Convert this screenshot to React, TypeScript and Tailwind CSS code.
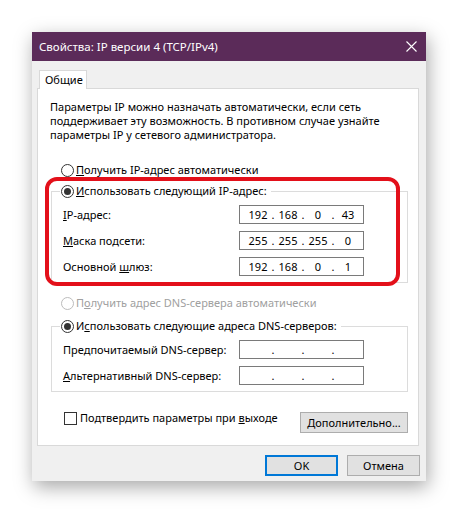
import React from "react";

// Windows 10 "Internet Protocol Version 4 (TCP/IPv4) Properties" dialog (ru-RU)

function Radio({ checked, disabled }: { checked?: boolean; disabled?: boolean }) {
  return (
    <span
      className={`flex h-[13px] w-[13px] shrink-0 items-center justify-center rounded-full border bg-white ${
        disabled ? "border-[#bcbcbc]" : "border-[#333333]"
      }`}
    >
      {checked && <span className="h-[7px] w-[7px] rounded-full bg-[#333333]" />}
    </span>
  );
}

function IpField({ value }: { value?: string[] }) {
  const parts = value ?? ["", "", "", ""];
  return (
    <div className="flex h-[19px] w-[125px] items-center border border-[#7a7a7a] bg-white pl-[6px]">
      {parts.map((p, i) => (
        <React.Fragment key={i}>
          <span className="w-[24px] text-center">{p}</span>
          {i < 3 && <span className="w-[6px] text-center">.</span>}
        </React.Fragment>
      ))}
    </div>
  );
}

function Row({ label, value }: { label: React.ReactNode; value?: string[] }) {
  return (
    <div className="flex items-center">
      <span className="flex-1 whitespace-nowrap">{label}</span>
      <IpField value={value} />
    </div>
  );
}

const U = ({ children }: { children: React.ReactNode }) => <span className="underline">{children}</span>;

export default function App() {
  return (
    <div className="relative h-[513px] w-[458px] overflow-hidden bg-white pl-[32px] pt-[32px] font-['Noto_Sans',sans-serif] text-[11px] leading-[16px] text-black">
      <div className="flex h-[449px] w-[394px] flex-col bg-[#f0f0f0] shadow-[2px_6px_18px_rgba(0,0,0,0.35)]">
        <div className="flex h-[29px] items-center justify-between bg-[#5b2b59] pl-[7px] pr-[8px] text-[11.5px] text-white">
          <span>Свойства: IP версии 4 (TCP/IPv4)</span>
          <svg width="11" height="11" viewBox="0 0 11 11" className="mr-[1px]">
            <path d="M0.5 0.5 L10.5 10.5 M10.5 0.5 L0.5 10.5" stroke="white" strokeWidth="1.1" fill="none" />
          </svg>
        </div>

        <div className="pl-[5px] pt-[9px]">
          <div className="relative z-10 -mb-px ml-[2px] flex h-[19px] w-[48px] items-center border border-b-0 border-[#d9d9d9] bg-white pl-[5px]">
            Общие
          </div>
          <div className="h-[358px] w-[382px] border border-[#d9d9d9] bg-white pl-[13px] pt-[11px]">
            <p className="-ml-px leading-[14px]">
              Параметры IP можно назначать автоматически, если сеть
              <br />
              поддерживает эту возможность. В противном случае узнайте
              <br />
              параметры IP у сетевого администратора.
            </p>

            <div className="ml-[10px] mt-[20px] flex h-[16px] items-center gap-[2px]">
              <Radio />
              <span>
                <U>П</U>олучить IP-адрес автоматически
              </span>
            </div>

            <fieldset className="mt-[5px] w-[357px] border border-[#dcdcdc] pb-[6px] pt-[6px]">
              <legend className="ml-[8px] flex h-[16px] items-center gap-[2px] pl-px pr-[4px]">
                <Radio checked />
                <span>
                  <U>И</U>спользовать следующий IP-адрес:
                </span>
              </legend>
              <div className="flex flex-col gap-[7px] pl-[11px] pr-[43px]">
                <Row
                  label={
                    <>
                      <U>I</U>P-адрес:
                    </>
                  }
                  value={["192", "168", "0", "43"]}
                />
                <Row
                  label={
                    <>
                      <U>М</U>аска подсети:
                    </>
                  }
                  value={["255", "255", "255", "0"]}
                />
                <Row
                  label={
                    <>
                      Основной <U>ш</U>люз:
                    </>
                  }
                  value={["192", "168", "0", "1"]}
                />
              </div>
            </fieldset>

            <div className="ml-[10px] mt-[12px] flex h-[16px] items-center gap-[2px] text-[#a0a0a0]">
              <Radio disabled />
              <span>
                П<U>о</U>лучить адрес DNS-сервера автоматически
              </span>
            </div>

            <fieldset className="mt-[7px] w-[357px] border border-[#dcdcdc] pb-[6px] pt-[6px]">
              <legend className="ml-[8px] flex h-[16px] items-center gap-[2px] pl-px pr-[4px]">
                <Radio checked />
                <span>
                  И<U>с</U>пользовать следующие адреса DNS-серверов:
                </span>
              </legend>
              <div className="flex flex-col gap-[7px] pl-[11px] pr-[43px]">
                <Row
                  label={
                    <>
                      Пре<U>д</U>почитаемый DNS-сервер:
                    </>
                  }
                />
                <Row
                  label={
                    <>
                      <U>А</U>льтернативный DNS-сервер:
                    </>
                  }
                />
              </div>
            </fieldset>

            <div className="mt-[20px] flex w-[357px] items-start justify-between">
              <div className="ml-[13px] mt-[-2px] flex h-[16px] items-center gap-[3px]">
                <span className="h-[13px] w-[13px] border border-[#333333] bg-white" />
                <span>
                  Подтвердить параметры при <U>в</U>ыходе
                </span>
              </div>
              <button className="flex h-[21px] w-[108px] items-center justify-center border border-[#adadad] bg-[#e1e1e1]">
                <span>
                  <U>Д</U>ополнительно...
                </span>
              </button>
            </div>
          </div>

          <div className="mt-[9px] flex justify-end gap-[9px] pr-[6px]">
            <button className="flex h-[21px] w-[73px] items-center justify-center border-2 border-[#0078d7] bg-[#e1e1e1]">
              OK
            </button>
            <button className="flex h-[21px] w-[73px] items-center justify-center border border-[#adadad] bg-[#e1e1e1]">
              Отмена
            </button>
          </div>
        </div>
      </div>

      {/* annotation highlight over the static-IP group */}
      <div className="pointer-events-none absolute left-[45px] top-[177px] h-[109px] w-[355px] rounded-[12px] border-4 border-[#e3101a]" />
    </div>
  );
}
